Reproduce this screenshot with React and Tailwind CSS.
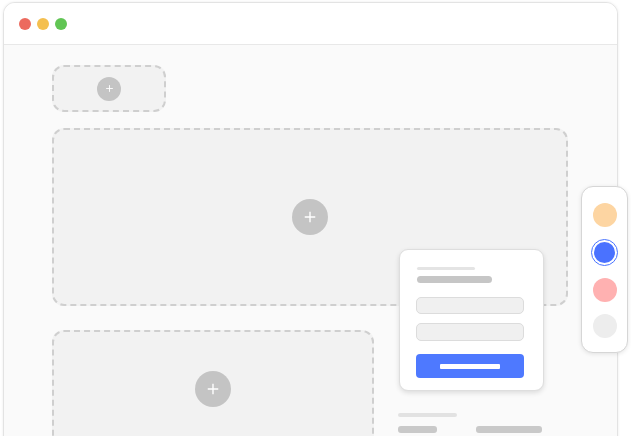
import React from 'react';

const PlusCircle = ({ size, icon }) => (
  <div
    className="flex items-center justify-center rounded-full bg-[#c4c4c4]"
    style={{ width: size, height: size }}
  >
    <svg width={icon} height={icon} viewBox="0 0 16 16" fill="none" stroke="#ffffff" strokeWidth="1.6" strokeLinecap="butt">
      <path d="M8 2v12M2 8h12" />
    </svg>
  </div>
);

const DropZone = ({ className, size, icon }) => (
  <div className={`flex items-center justify-center rounded-[12px] border-2 border-dashed border-[#cfcfcf] bg-[#f2f2f2] ${className}`}>
    <PlusCircle size={size} icon={icon} />
  </div>
);

const Swatch = ({ color, selected }) =>
  selected ? (
    <div className="flex h-[27px] w-[27px] items-center justify-center rounded-full border-[1.5px] border-[#4a74ff] bg-white">
      <div className={`h-[21px] w-[21px] rounded-full ${color}`} />
    </div>
  ) : (
    <div className={`h-[24px] w-[24px] rounded-full ${color}`} />
  );

export default function App() {
  return (
    <div className="relative h-[436px] w-[631px] overflow-hidden bg-white font-['Inter',sans-serif]">
      <div className="ml-[3px] mt-[2px] h-[440px] w-[615px] overflow-hidden rounded-t-[12px] border border-[#e3e3e3] bg-[#fafafa] shadow-[0_0_3px_rgba(0,0,0,0.08)]">
        {/* title bar */}
        <div className="flex h-[42px] items-center gap-[6px] border-b border-[#e8e8e8] bg-white pl-[15px]">
          <span className="h-[12px] w-[12px] rounded-full bg-[#ec6a5e]" />
          <span className="h-[12px] w-[12px] rounded-full bg-[#f4bf4f]" />
          <span className="h-[12px] w-[12px] rounded-full bg-[#61c554]" />
        </div>

        {/* canvas */}
        <div className="flex flex-col pl-[48px] pt-[20px]">
          <DropZone className="h-[47px] w-[114px]" size={24} icon={9} />
          <DropZone className="mt-[16px] h-[178px] w-[516px]" size={36} icon={14} />
          <div className="mt-[24px] flex gap-[24px]">
            <DropZone className="h-[118px] w-[322px]" size={36} icon={14} />
            <div className="flex flex-col pt-[83px]">
              <div className="h-[4px] w-[59px] rounded-full bg-[#e2e2e2]" />
              <div className="mt-[9px] flex gap-[39px]">
                <div className="h-[7px] w-[39px] rounded-[3px] bg-[#c9c9c9]" />
                <div className="h-[7px] w-[66px] rounded-[3px] bg-[#c9c9c9]" />
              </div>
            </div>
          </div>
        </div>
      </div>

      {/* floating form card */}
      <div className="absolute left-[399px] top-[249px] flex h-[142px] w-[145px] flex-col rounded-[9px] border border-[#dedede] bg-white px-[16px] pt-[17px] shadow-[0_2px_5px_rgba(0,0,0,0.12)]">
        <div className="ml-[1px] h-[3px] w-[58px] rounded-full bg-[#e4e4e4]" />
        <div className="ml-[1px] mt-[6px] h-[7px] w-[75px] rounded-full bg-[#c6c6c6]" />
        <div className="mt-[14px] h-[17px] w-[108px] rounded-[5px] border border-[#dcdcdc] bg-[#f0f0f0]" />
        <div className="mt-[9px] h-[18px] w-[108px] rounded-[5px] border border-[#dcdcdc] bg-[#f0f0f0]" />
        <div className="mt-[13px] flex h-[24px] w-[108px] items-center justify-center rounded-[4px] bg-[#4e79ff]">
          <div className="h-[5px] w-[60px] rounded-[1px] bg-white" />
        </div>
      </div>

      {/* colour palette */}
      <div className="absolute left-[581px] top-[186px] flex h-[167px] w-[47px] flex-col items-center gap-[12px] rounded-[12px] border border-[#d6d6d6] bg-white pt-[16px] shadow-[0_1px_4px_rgba(0,0,0,0.1)]">
        <Swatch color="bg-[#fdd5a2]" />
        <Swatch color="bg-[#4a72ff]" selected />
        <Swatch color="bg-[#ffb1b1]" />
        <Swatch color="bg-[#ededed]" />
      </div>
    </div>
  );
}
